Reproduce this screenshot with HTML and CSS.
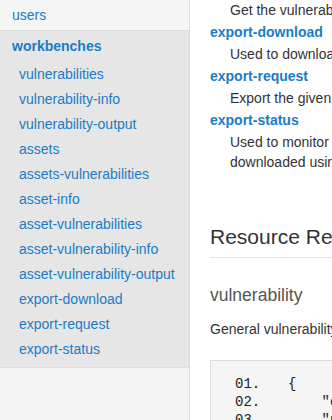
FILE: index.html
```html
<!DOCTYPE html>
<html>
<head>
<meta charset="utf-8">
<link rel="stylesheet" href="styles.css">
</head>
<body>
<nav class="sidebar">
  <div class="top-row"><a href="#">users</a></div>
  <div class="section">
    <a class="section-title" href="#">workbenches</a>
    <ul class="items">
      <li><a href="#">vulnerabilities</a></li>
      <li><a href="#">vulnerability-info</a></li>
      <li><a href="#">vulnerability-output</a></li>
      <li><a href="#">assets</a></li>
      <li><a href="#">assets-vulnerabilities</a></li>
      <li><a href="#">asset-info</a></li>
      <li><a href="#">asset-vulnerabilities</a></li>
      <li><a href="#">asset-vulnerability-info</a></li>
      <li><a href="#">asset-vulnerability-output</a></li>
      <li><a href="#">export-download</a></li>
      <li><a href="#">export-request</a></li>
      <li><a href="#">export-status</a></li>
    </ul>
  </div>
  <div class="rest"></div>
</nav>
<main class="content">
  <dl class="methods">
    <dd class="first">Get the vulnerability output for a specific vulnerability.</dd>
    <dt><a href="#">export-download</a></dt>
    <dd>Used to download a chunk of exported vulnerabilities.</dd>
    <dt><a href="#">export-request</a></dt>
    <dd>Export the given vulnerabilities in the requested format.</dd>
    <dt><a href="#">export-status</a></dt>
    <dd>Used to monitor the status of an export request. Once complete, the chunks can be<br>downloaded using export-download.</dd>
  </dl>
  <h2 class="res-title">Resource Reference</h2>
  <h3 class="res-name">vulnerability</h3>
  <p class="res-desc">General vulnerability information returned by the workbenches.</p>
  <div class="code">
    <div class="ln">01.</div><pre class="src">{</pre>
    <div class="ln">02.</div><pre class="src">    "count": 0,</pre>
    <div class="ln">03.</div><pre class="src">    "plugin_family": "string",</pre>
  </div>
</main>
</body>
</html>
```
FILE: styles.css
```css
html, body {
  margin: 0;
  padding: 0;
}
body {
  display: flex;
  align-items: flex-start;
  width: 900px;
  height: 420px;
  overflow: hidden;
  font-family: "Liberation Sans", Arial, sans-serif;
  font-size: 14px;
  color: #333;
  background: #fff;
}
a {
  color: #1a7cc7;
  text-decoration: none;
}
.sidebar {
  width: 189px;
  flex: 0 0 189px;
  height: 420px;
  border-right: 1px solid #dcdcdc;
  background: #f5f5f5;
  display: flex;
  flex-direction: column;
}
.top-row {
  height: 30px;
  line-height: 30px;
  padding-left: 12px;
  border-bottom: 1px solid #dedede;
  background: #f5f5f5;
}
.section {
  background: #e6e6e6;
  padding: 3px 0 5px;
  border-bottom: 1px solid #dedede;
}
.section-title {
  display: block;
  padding-left: 12px;
  line-height: 25px;
  font-weight: bold;
  margin-bottom: 3px;
}
.items {
  list-style: none;
  margin: 0;
  padding: 0;
}
.items li {
  line-height: 25px;
  padding-left: 19px;
  white-space: nowrap;
}
.rest {
  flex: 1;
  background: #f4f4f4;
}
.content {
  flex: 1;
  padding: 0 20px;
}
.methods {
  margin: 0;
}
.methods dt {
  margin-top: 1px;
  line-height: 22px;
  font-weight: bold;
}
.methods dd {
  margin: 1px 0 0 20px;
  line-height: 20px;
  white-space: nowrap;
}
.methods dd.first {
  margin-top: 0;
}
.res-title {
  margin: 52px 0 0;
  font-size: 21px;
  font-weight: normal;
  line-height: 25px;
  padding-bottom: 8px;
  border-bottom: 1px solid #e2e2e2;
  color: #333;
}
.res-name {
  margin: 26px 0 0;
  font-size: 17.5px;
  font-weight: normal;
  line-height: 22px;
  color: #555;
}
.res-desc {
  margin: 13px 0 0;
  line-height: 20px;
  white-space: nowrap;
}
.code {
  margin-top: 21px;
  border: 1px solid #dcdcdc;
  background: #f5f5f5;
  padding: 14px 24px 20px;
  display: grid;
  grid-template-columns: 53px 1fr;
  font-family: "Liberation Mono", "Courier New", monospace;
  font-size: 14px;
  line-height: 18px;
  color: #222;
}
.ln, .src {
  margin: 0;
  font: inherit;
  white-space: pre;
}
```
